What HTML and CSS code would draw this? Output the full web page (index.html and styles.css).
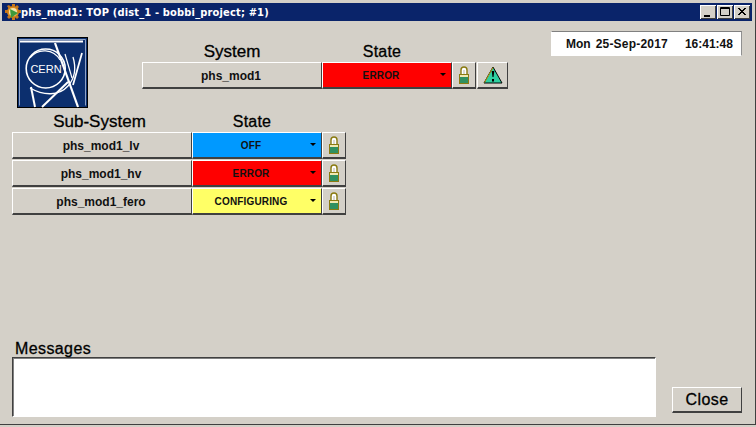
FILE: index.html
```html
<!DOCTYPE html>
<html lang="en">
<head>
<meta charset="utf-8">
<title>phs_mod1: TOP</title>
<link rel="stylesheet" href="styles.css">
</head>
<body>
<div class="window">
  <header class="titlebar">
    <svg class="app-icon" viewBox="0 0 16 16" width="16" height="16">
      <circle cx="8" cy="8" r="6" fill="#d98a1c"/>
      <path d="M7 0h3v3H7zM7 13h3v3H7zM0 6h3v3H0zM13 6h3v3h-3zM2 2l2-1 2 2-2 2zM12 1l2 2-2 2-2-2zM2 13l2-2 2 2-2 2zM12 11l2 2-2 2-2-2z" fill="#c9781a"/>
      <circle cx="8" cy="8" r="4" fill="#f3e3b0"/>
      <path d="M5 5l8 4-7 5z" fill="#3f9a3a"/>
    </svg>
    <span class="title-text">phs_mod1: TOP (dist_1 - bobbi_project; #1)</span>
    <div class="win-buttons">
      <span class="win-btn"><svg viewBox="0 0 16 14" width="16" height="14"><path d="M4 10h6v2H4z" fill="#000"/></svg></span>
      <span class="win-btn"><svg viewBox="0 0 16 14" width="16" height="14"><path d="M3.500 2.500h9v8h-9z" fill="none" stroke="#000"/><path d="M3 3.500h10" stroke="#000"/></svg></span>
      <span class="win-btn"><svg viewBox="0 0 16 14" width="16" height="14"><path d="M4 3l7 7M5 3l7 7M11 3l-7 7M12 3l-7 7" stroke="#000" fill="none"/></svg></span>
    </div>
  </header>

  <main class="panel">
    <section class="top-row">
      <svg class="logo" viewBox="0 0 71 71" width="71" height="71">
        <rect x="0.5" y="0.5" width="70" height="70" fill="#0c2f6e" stroke="#000"/>
        <path d="M2.500 3v65.500M2 2.500h66.500v66" stroke="#8ea2c6" fill="none"/>
        <path d="M3 4.500h63" stroke="#fff" stroke-width="2"/>
        <g fill="none" stroke="#fff">
          <circle cx="28.700" cy="31.500" r="19.500" stroke-width="1.600"/>
          <path d="M13 21a18 18 0 0 1 30 2" stroke-width="1.200"/>
          <path d="M56 20c3 10 2 21-5 29-9 10-24 10-38 2" stroke-width="1.300"/>
          <path d="M14 50l4 20" stroke-width="2"/>
          <path d="M38 6l23 64" stroke-width="2.200"/>
          <path d="M25 70l26-25" stroke-width="2"/>
          <path d="M65 16l-9 32" stroke-width="1.800"/>
          <path d="M48 17l7 24" stroke-width="1.200"/>
        </g>
        <text class="logo-text" x="29" y="36" text-anchor="middle">CERN</text>
      </svg>
      <div class="system-grid">
        <div class="heading">System</div>
        <div class="heading heading-state">State</div>
        <div></div>
        <div></div>
        <div class="btn name">phs_mod1</div>
        <div class="btn state red">ERROR<i class="caret"></i></div>
        <div class="btn icon">
          <svg viewBox="0 0 12 18" width="12" height="18"><use href="#lock"/></svg>
        </div>
        <div class="btn icon warn">
          <svg viewBox="0 0 20 18" width="20" height="18">
            <path d="M10 1L1 17h18z" fill="#2ecfa0" stroke="#000" stroke-linejoin="round"/>
            <path d="M1.500 16.500L10 1.500" stroke="#b79a10" fill="none"/>
            <path d="M8.700 5h2.600l-.8 6h-1zM9 13h2v2.500H9z" fill="#000"/>
          </svg>
        </div>
      </div>
      <div class="clock"><span>Mon</span><span class="date">25-Sep-2017</span><span class="time">16:41:48</span></div>
    </section>

    <section class="sub-grid">
      <div class="heading heading-sub">Sub-System</div>
      <div class="heading heading-state">State</div>
      <div></div>

      <div class="btn name">phs_mod1_lv</div>
      <div class="btn state blue">OFF<i class="caret"></i></div>
      <div class="btn icon"><svg viewBox="0 0 12 18" width="12" height="18"><use href="#lock"/></svg></div>

      <div class="btn name">phs_mod1_hv</div>
      <div class="btn state red">ERROR<i class="caret"></i></div>
      <div class="btn icon"><svg viewBox="0 0 12 18" width="12" height="18"><use href="#lock"/></svg></div>

      <div class="btn name">phs_mod1_fero</div>
      <div class="btn state yellow">CONFIGURING<i class="caret"></i></div>
      <div class="btn icon"><svg viewBox="0 0 12 18" width="12" height="18"><use href="#lock"/></svg></div>
    </section>

    <section class="bottom-row">
      <div class="messages">
        <div class="messages-label">Messages</div>
        <div class="messages-box"></div>
      </div>
      <div class="btn close">Close</div>
    </section>
  </main>
</div>

<svg class="defs" width="0" height="0">
  <symbol id="lock" viewBox="0 0 12 18">
    <path d="M3 9V4a3 3 0 0 1 6 0v5" fill="#fff" stroke="#8a7a10" stroke-width="1.400"/>
    <path d="M5.500 9V4h1v5" fill="#b8b4a8"/>
    <rect x="1.500" y="8.500" width="9" height="9" fill="#f0e8b0" stroke="#8a7a10"/>
    <rect x="2" y="11" width="8" height="6" fill="#2f9060"/>
  </symbol>
</svg>
</body>
</html>
```

FILE: styles.css
```css
* { box-sizing: border-box; }

html, body {
  margin: 0;
  padding: 0;
  width: 756px;
  height: 427px;
  overflow: hidden;
  background: #d4d0c8;
}

body {
  font-family: "Liberation Sans", Arial, sans-serif;
  color: #000;
}

.window {
  width: 756px;
  height: 425px;
  padding: 3px 3px 0 2px;
  border-right: 1px solid #404040;
  border-bottom: 1px solid #404040;
  display: flex;
  flex-direction: column;
  background: #d4d0c8;
}

.titlebar {
  height: 18px;
  flex: none;
  background: #0a246a;
  color: #fff;
  display: flex;
  align-items: center;
  padding: 0 2px 0 3px;
}

.app-icon { flex: none; }

.title-text {
  font-family: "DejaVu Sans", Verdana, sans-serif;
  font-size: 11px;
  font-weight: 700;
  font-stretch: condensed;
  letter-spacing: 0.17px;
  white-space: nowrap;
}

.win-buttons {
  margin-left: auto;
  display: flex;
  gap: 1px;
}

.win-btn {
  width: 16px;
  height: 14px;
  background: #d4d0c8;
  box-shadow: inset 1px 1px 0 #fff, inset -1px -1px 0 #404040;
  display: block;
  line-height: 0;
}

.panel {
  flex: 1;
  display: flex;
  flex-direction: column;
  min-height: 0;
}

.top-row {
  height: 91px;
  flex: none;
  display: flex;
  align-items: flex-start;
}

.logo {
  flex: none;
  margin: 16px 0 0 15px;
}

.system-grid {
  display: grid;
  grid-template-columns: 180px 130px 24px 32px;
  grid-template-rows: 23px 27px;
  margin: 18px 0 0 54px;
}

.heading {
  font-size: 17px;
  line-height: 18px;
  text-align: center;
  align-self: end;
  padding-bottom: 1px;
  -webkit-text-stroke: 0.3px #000;
}

.heading-state {
  font-size: 16px;
  letter-spacing: 0.2px;
  padding-right: 10px;
}

.heading-sub { padding-right: 5px; }

.clock {
  margin: 10px 0 0 43px;
  width: 191px;
  height: 25px;
  background: #fff;
  border: 1px solid;
  border-color: #808080 #909090 #fff #fff;
  display: flex;
  align-items: center;
  font-size: 12px;
  font-weight: 700;
  color: #111;
  padding-left: 14px;
}

.clock .date { margin-left: 5px; letter-spacing: 0.2px; }
.clock .time { margin-left: 17px; }

.sub-grid {
  display: grid;
  grid-template-columns: 180px 130px 24px;
  grid-template-rows: 19px 27px 27px 27px;
  row-gap: 1px;
  margin-left: 10px;
  width: 334px;
  flex: none;
}

.sub-grid .heading { padding-bottom: 0; }

.btn {
  background: #d4d0c8;
  border: 1px solid;
  border-color: #fff #404040 #404040 #fff;
  border-bottom-width: 2px;
  display: flex;
  align-items: center;
  justify-content: center;
  position: relative;
}

.name {
  font-size: 12px;
  font-weight: 700;
  color: #111;
  padding: 1px 2px 0 0;
}

.state {
  font-size: 10px;
  font-weight: 700;
  letter-spacing: 0.15px;
  padding-right: 12px;
  color: #111;
}

.red { background: #ff0000; }
.blue { background: #0099ff; }
.yellow { background: #ffff66; }

.caret {
  position: absolute;
  right: 5px;
  top: 10px;
  width: 0;
  height: 0;
  border: 3px solid transparent;
  border-top-color: #000;
  border-bottom-width: 0;
}

.icon svg { display: block; }
.warn { margin-left: 1px; }

.bottom-row {
  flex: 1;
  display: flex;
  align-items: flex-end;
  padding: 0 0 7px 10px;
}

.messages { width: 644px; }

.messages-label {
  font-size: 16px;
  line-height: 16px;
  padding-left: 3px;
  letter-spacing: 0.4px;
  -webkit-text-stroke: 0.3px #000;
}

.messages-box {
  height: 60px;
  background: #fff;
  border: 1px solid;
  border-color: #404040 #fff #fff #404040;
  box-shadow: inset 1px 1px 0 #808080, 0 1px 0 #d4d0c8;
}

.close {
  width: 70px;
  height: 26px;
  margin: 0 0 4px 16px;
  font-size: 16px;
  -webkit-text-stroke: 0.3px #000;
  letter-spacing: 0.4px;
}

.defs { position: absolute; }

.logo-text {
  font-family: "Liberation Sans", Arial, sans-serif;
  font-size: 11px;
  fill: #fff;
}
```
